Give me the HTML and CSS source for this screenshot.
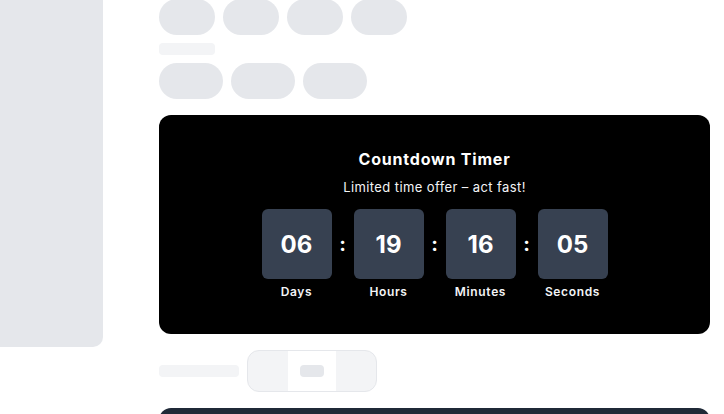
FILE: index.html
```html
<!DOCTYPE html>
<html lang="en">
<head>
<meta charset="utf-8">
<title>Countdown Timer</title>
<link rel="stylesheet" href="styles.css">
</head>
<body>
<div class="page">
  <aside class="sidebar"></aside>
  <main class="main">
    <div class="pill-row">
      <span class="pill pill-sm"></span>
      <span class="pill pill-sm"></span>
      <span class="pill pill-sm"></span>
      <span class="pill pill-sm"></span>
    </div>
    <div class="label-bar"></div>
    <div class="pill-row row-2">
      <span class="pill pill-md"></span>
      <span class="pill pill-md"></span>
      <span class="pill pill-md"></span>
    </div>

    <section class="timer-card">
      <h2 class="timer-title">Countdown Timer</h2>
      <p class="timer-sub">Limited time offer – act fast!</p>
      <div class="timer-units">
        <div class="unit">
          <div class="unit-box">06</div>
          <div class="unit-label">Days</div>
        </div>
        <div class="sep">:</div>
        <div class="unit">
          <div class="unit-box">19</div>
          <div class="unit-label">Hours</div>
        </div>
        <div class="sep">:</div>
        <div class="unit">
          <div class="unit-box">16</div>
          <div class="unit-label">Minutes</div>
        </div>
        <div class="sep">:</div>
        <div class="unit">
          <div class="unit-box">05</div>
          <div class="unit-label">Seconds</div>
        </div>
      </div>
    </section>

    <div class="control-row">
      <div class="ctrl-label"></div>
      <div class="segmented">
        <span class="seg"></span>
        <span class="seg seg-active"><span class="seg-chip"></span></span>
        <span class="seg"></span>
      </div>
    </div>

    <section class="dark-card"></section>
  </main>
</div>
</body>
</html>
```

FILE: styles.css
```css
* { box-sizing: border-box; }

html, body {
  margin: 0;
  padding: 0;
  background: #ffffff;
  font-family: Inter, "Liberation Sans", sans-serif;
  overflow: hidden;
}

.page {
  display: flex;
  align-items: flex-start;
  width: 724px;
  height: 414px;
}

.sidebar {
  flex: 0 0 103px;
  height: 347px;
  background: #e5e7eb;
  border-bottom-right-radius: 10px;
}

.main {
  margin-left: 56px;
  width: 551px;
  margin-top: -1px;
  display: flex;
  flex-direction: column;
}

.pill-row {
  display: flex;
  gap: 8px;
}

.row-2 { margin-top: 8px; }

.pill {
  display: block;
  height: 36px;
  border-radius: 9999px;
  background: #e5e7eb;
}

.pill-sm { width: 56px; }
.pill-md { width: 64px; }

.label-bar {
  margin-top: 8px;
  width: 56px;
  height: 12px;
  border-radius: 4px;
  background: #f3f4f6;
}

.timer-card {
  margin-top: 16px;
  background: #000000;
  border-radius: 12px;
  padding: 32px 32px 34px;
  display: flex;
  flex-direction: column;
  align-items: center;
  color: #ffffff;
}

.timer-title {
  margin: 0;
  font-size: 16px;
  line-height: 24px;
  font-weight: 700;
  letter-spacing: 0.8px;
}

.timer-sub {
  margin: 7px 0 0;
  font-size: 13px;
  line-height: 19px;
  color: #f3f4f6;
  letter-spacing: 0.4px;
}

.timer-units {
  margin-top: 12px;
  display: flex;
  align-items: flex-start;
  gap: 8px;
}

.unit {
  display: flex;
  flex-direction: column;
  align-items: center;
  width: 70px;
}

.unit-box {
  width: 70px;
  height: 70px;
  border-radius: 6px;
  background: #374151;
  display: flex;
  align-items: center;
  justify-content: center;
  font-size: 24px;
  font-weight: 700;
  color: #ffffff;
}

.unit-label {
  margin-top: 5px;
  font-size: 12px;
  line-height: 16px;
  font-weight: 600;
  color: #f3f4f6;
  white-space: nowrap;
  letter-spacing: 0.65px;
}

.sep {
  width: 6px;
  height: 70px;
  display: flex;
  align-items: center;
  justify-content: center;
  font-size: 20px;
  font-weight: 700;
  color: #ffffff;
}

.control-row {
  margin-top: 16px;
  display: flex;
  align-items: center;
  gap: 8px;
}

.ctrl-label {
  width: 80px;
  height: 12px;
  border-radius: 4px;
  background: #f3f4f6;
}

.segmented {
  display: flex;
  height: 42px;
  border: 1px solid #e5e7eb;
  border-radius: 12px;
  background: #f3f4f6;
  overflow: hidden;
}

.seg {
  width: 40px;
  display: flex;
  align-items: center;
  justify-content: center;
}

.seg-active {
  width: 48px;
  background: #ffffff;
}

.seg-chip {
  width: 24px;
  height: 12px;
  border-radius: 4px;
  background: #e5e7eb;
}

.dark-card {
  margin-top: 16px;
  height: 120px;
  background: #1f2937;
  border-radius: 12px;
}
```
